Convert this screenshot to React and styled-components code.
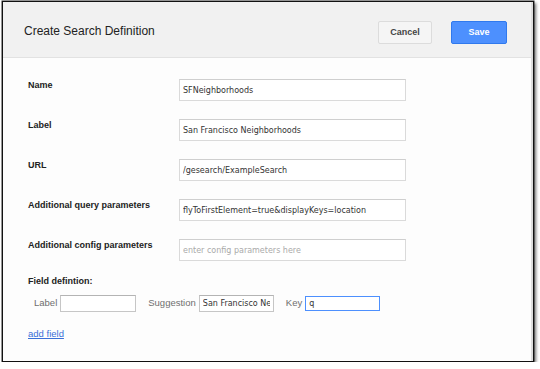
import React from "react";
import styled, { createGlobalStyle } from "styled-components";

const GlobalStyle = createGlobalStyle`
  body {
    margin: 0;
    background: #ffffff;
    font-family: "Liberation Sans", Arial, sans-serif;
  }
`;

const Dialog = styled.div`
  box-sizing: border-box;
  margin: 1px 0 0 2px;
  width: 532px;
  height: 361px;
  border: 1px solid #111;
  box-shadow: 0 0 0 0.5px #333, 2px 2px 3px rgba(0, 0, 0, 0.55);
  background: #dedede;
  padding-right: 2px;
  display: flex;
  flex-direction: column;
`;

const Header = styled.div`
  box-sizing: border-box;
  height: 56px;
  background: #f1f1f1;
  border-bottom: 1px solid #e2e2e2;
  display: flex;
  align-items: center;
  padding: 5px 24px 0 21px;
`;

const Title = styled.h1`
  margin: 0 auto 2px 0;
  font-size: 12px;
  font-weight: normal;
  color: #222;
`;

const Button = styled.button`
  box-sizing: border-box;
  height: 23px;
  min-width: ${(p) => (p.primary ? "56px" : "54px")};
  margin-left: ${(p) => (p.primary ? "19px" : "0")};
  padding: 0 10px;
  border-radius: 2px;
  border: 1px solid ${(p) => (p.primary ? "#3079ed" : "#dcdcdc")};
  background: ${(p) => (p.primary ? "#4d90fe" : "#f5f5f5")};
  color: ${(p) => (p.primary ? "#ffffff" : "#444")};
  font-family: "Liberation Sans", Arial, sans-serif;
  font-weight: bold;
  font-size: 9px;
`;

const Body = styled.div`
  flex: 1;
  background: #fdfdfd;
  padding: 21px 0 0 25px;
`;

const Form = styled.div`
  display: flex;
  flex-direction: column;
  gap: 18px;
`;

const Row = styled.div`
  display: grid;
  grid-template-columns: 151px 227px;
  align-items: start;
`;

const Label = styled.label`
  padding-top: 1px;
  font-size: 9px;
  line-height: 11px;
  font-weight: bold;
  color: #222;
`;

const Input = styled.input`
  box-sizing: border-box;
  width: ${(p) => p.$w || "227px"};
  height: ${(p) => p.$h || "22px"};
  margin: 0;
  padding: 0 3px;
  border: 1px solid ${(p) => (p.$focus ? "#4d90fe" : p.$small ? "#c6c6c6" : "#dadada")};
  border-top-color: ${(p) => (p.$focus ? "#4d90fe" : p.$small ? "#b4b4b4" : "#cfcfcf")};
  border-radius: 0;
  background: #fff;
  font-family: "DejaVu Sans", sans-serif;
  font-size: 8px;
  color: #333;
  outline: none;
  &::placeholder {
    color: #aaa;
  }
`;

const Section = styled.div`
  margin-top: 15px;
  font-size: 9px;
  line-height: 11px;
  font-weight: bold;
  color: #222;
`;

const FieldRow = styled.div`
  display: flex;
  align-items: center;
  margin: 8px 0 0 6px;
`;

const FieldLabel = styled.span`
  font-size: 9.5px;
  color: #6f6f6f;
  margin: -3px 3px 0 ${(p) => (p.first ? "0" : "12px")};
`;

const AddLink = styled.a`
  display: inline-block;
  margin-top: 16px;
  font-size: 9.5px;
  color: #3a6fd8;
  text-decoration: underline;
`;

const fields = [
  { label: "Name", value: "SFNeighborhoods" },
  { label: "Label", value: "San Francisco Neighborhoods" },
  { label: "URL", value: "/gesearch/ExampleSearch" },
  { label: "Additional query parameters", value: "flyToFirstElement=true&displayKeys=location" },
  { label: "Additional config parameters", value: "", placeholder: "enter config parameters here" },
];

export default function App() {
  return (
    <>
      <GlobalStyle />
      <Dialog>
        <Header>
          <Title>Create Search Definition</Title>
          <Button>Cancel</Button>
          <Button primary>Save</Button>
        </Header>
        <Body>
          <Form>
            {fields.map((f) => (
              <Row key={f.label}>
                <Label>{f.label}</Label>
                <Input readOnly value={f.value} placeholder={f.placeholder} />
              </Row>
            ))}
          </Form>
          <Section>Field defintion:</Section>
          <FieldRow>
            <FieldLabel first>Label</FieldLabel>
            <Input $small $w="76px" $h="17px" readOnly value="" />
            <FieldLabel>Suggestion</FieldLabel>
            <Input $small $w="75px" $h="17px" readOnly value="San Francisco Neighborhoods" />
            <FieldLabel>Key</FieldLabel>
            <Input $small $focus $w="75px" $h="15px" readOnly value="q" />
          </FieldRow>
          <AddLink href="#">add field</AddLink>
        </Body>
      </Dialog>
    </>
  );
}
